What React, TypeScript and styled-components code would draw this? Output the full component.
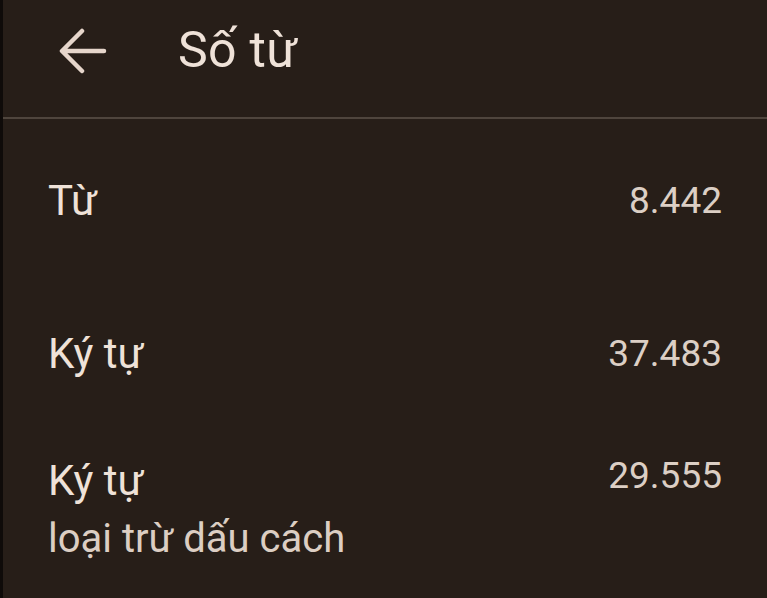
import React from "react";
import styled, { createGlobalStyle } from "styled-components";

const GlobalStyle = createGlobalStyle`
  html, body {
    margin: 0;
    padding: 0;
    background: #271e18;
  }
  body {
    font-family: Roboto, "Noto Sans", "Liberation Sans", sans-serif;
  }
`;

const Screen = styled.div`
  width: 767px;
  min-height: 598px;
  box-sizing: border-box;
  background: #271e18;
  border-left: 3px solid #0f0b09;
  overflow: hidden;
`;

const Header = styled.header`
  height: 117px;
  display: flex;
  align-items: flex-start;
  box-sizing: border-box;
`;

const BackButton = styled.button`
  width: 60px;
  height: 60px;
  margin: 21px 0 0 50px;
  padding: 0;
  border: 0;
  background: transparent;
  display: flex;
  align-items: center;
  justify-content: center;
  cursor: pointer;
`;

const Title = styled.h1`
  margin: 21px 0 0 65px;
  font-size: 50px;
  line-height: 58px;
  font-weight: 400;
  color: #efe2d8;
  letter-spacing: 0.3px;
`;

const Divider = styled.div`
  height: 2px;
  background: #4f453d;
`;

const List = styled.div`
  display: flex;
  flex-direction: column;
  padding: 0 45px 0 45px;
`;

const Row = styled.div<{ $top: number }>`
  display: flex;
  justify-content: space-between;
  align-items: flex-start;
  margin-top: ${(p) => p.$top}px;
`;

const Labels = styled.div`
  display: flex;
  flex-direction: column;
`;

const Label = styled.div`
  font-size: 42px;
  line-height: 52px;
  color: #efe2d8;
`;

const SubLabel = styled.div`
  margin-top: 8px;
  font-size: 40px;
  line-height: 48px;
  color: #dccec3;
`;

const Value = styled.div<{ $lift?: number }>`
  font-size: 37px;
  line-height: 52px;
  color: #dccfc5;
  margin-top: ${(p) => -(p.$lift ?? 0)}px;
`;

const ArrowBack = () => (
  <svg width="48" height="48" viewBox="0 0 48 48" fill="none">
    <path
      d="M45 24H4M23 4L3 24l20 20"
      stroke="#e6d6cb"
      strokeWidth="4.5"
      strokeLinecap="round"
      strokeLinejoin="round"
    />
  </svg>
);

type Stat = { label: string; sub?: string; value: string; top: number; lift?: number };

const stats: Stat[] = [
  { label: "Từ", value: "8.442", top: 56 },
  { label: "Ký tự", value: "37.483", top: 101 },
  { label: "Ký tự", sub: "loại trừ dấu cách", value: "29.555", top: 75, lift: 5 },
];

export default function App() {
  return (
    <Screen>
      <GlobalStyle />
      <Header>
        <BackButton aria-label="Quay lại">
          <ArrowBack />
        </BackButton>
        <Title>Số từ</Title>
      </Header>
      <Divider />
      <List>
        {stats.map((s, i) => (
          <Row key={i} $top={s.top}>
            <Labels>
              <Label>{s.label}</Label>
              {s.sub && <SubLabel>{s.sub}</SubLabel>}
            </Labels>
            <Value $lift={s.lift}>{s.value}</Value>
          </Row>
        ))}
      </List>
    </Screen>
  );
}
